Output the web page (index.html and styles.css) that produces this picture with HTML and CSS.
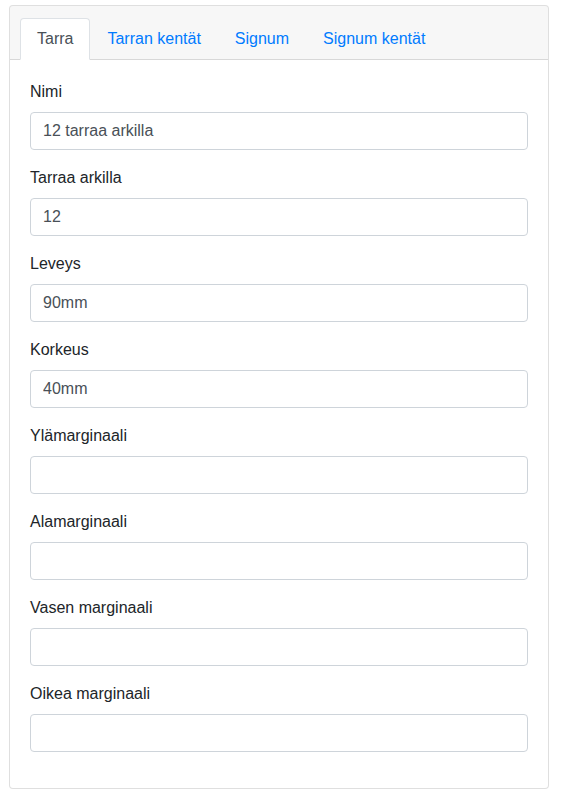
FILE: index.html
```html
<!DOCTYPE html>
<html lang="fi">
<head>
<meta charset="utf-8">
<link rel="stylesheet" href="styles.css">
</head>
<body>
<div class="page">
  <div class="card">
    <div class="card-header">
      <ul class="tabs">
        <li class="tab active">Tarra</li>
        <li class="tab">Tarran kentät</li>
        <li class="tab">Signum</li>
        <li class="tab">Signum kentät</li>
      </ul>
    </div>
    <div class="card-body">
      <div class="form-group"><label class="label">Nimi</label><input class="input" type="text" value="12 tarraa arkilla"></div>
      <div class="form-group"><label class="label">Tarraa arkilla</label><input class="input" type="text" value="12"></div>
      <div class="form-group"><label class="label">Leveys</label><input class="input" type="text" value="90mm"></div>
      <div class="form-group"><label class="label">Korkeus</label><input class="input" type="text" value="40mm"></div>
      <div class="form-group"><label class="label">Ylämarginaali</label><input class="input" type="text" value=""></div>
      <div class="form-group"><label class="label">Alamarginaali</label><input class="input" type="text" value=""></div>
      <div class="form-group"><label class="label">Vasen marginaali</label><input class="input" type="text" value=""></div>
      <div class="form-group"><label class="label">Oikea marginaali</label><input class="input" type="text" value=""></div>
    </div>
  </div>
</div>
</body>
</html>
```
FILE: styles.css
```css
* { box-sizing: border-box; }
html, body { margin: 0; padding: 0; background: #fff; }
body {
  font-family: "Liberation Sans", Arial, sans-serif;
  font-size: 16px;
  line-height: 24px;
  color: #212529;
}
.page { padding: 5px 20px 0 9px; }
.card {
  width: 540px;
  border: 1px solid rgba(0,0,0,.125);
  border-radius: 4px;
  background: #fff;
  overflow: hidden;
}
.card-header {
  background: rgba(0,0,0,.03);
  border-bottom: 1px solid rgba(0,0,0,.125);
  padding: 12px 10px 0;
}
.tabs {
  display: flex;
  list-style: none;
  margin: 0;
  padding: 0;
}
.tab {
  padding: 8px 16px;
  border: 1px solid transparent;
  border-radius: 4px 4px 0 0;
  margin-bottom: -1px;
  color: #007bff;
}
.tab.active {
  color: #495057;
  background: #fff;
  border-color: #dee2e6 #dee2e6 #fff;
}
.card-body { padding: 20px; }
.form-group { margin-bottom: 16px; }
.label { display: block; margin-bottom: 8px; }
.input {
  display: block;
  width: 100%;
  height: 38px;
  padding: 6px 12px;
  font-family: inherit;
  font-size: 16px;
  line-height: 24px;
  color: #495057;
  background: #fff;
  border: 1px solid #ced4da;
  border-radius: 4px;
  outline: none;
}
```
